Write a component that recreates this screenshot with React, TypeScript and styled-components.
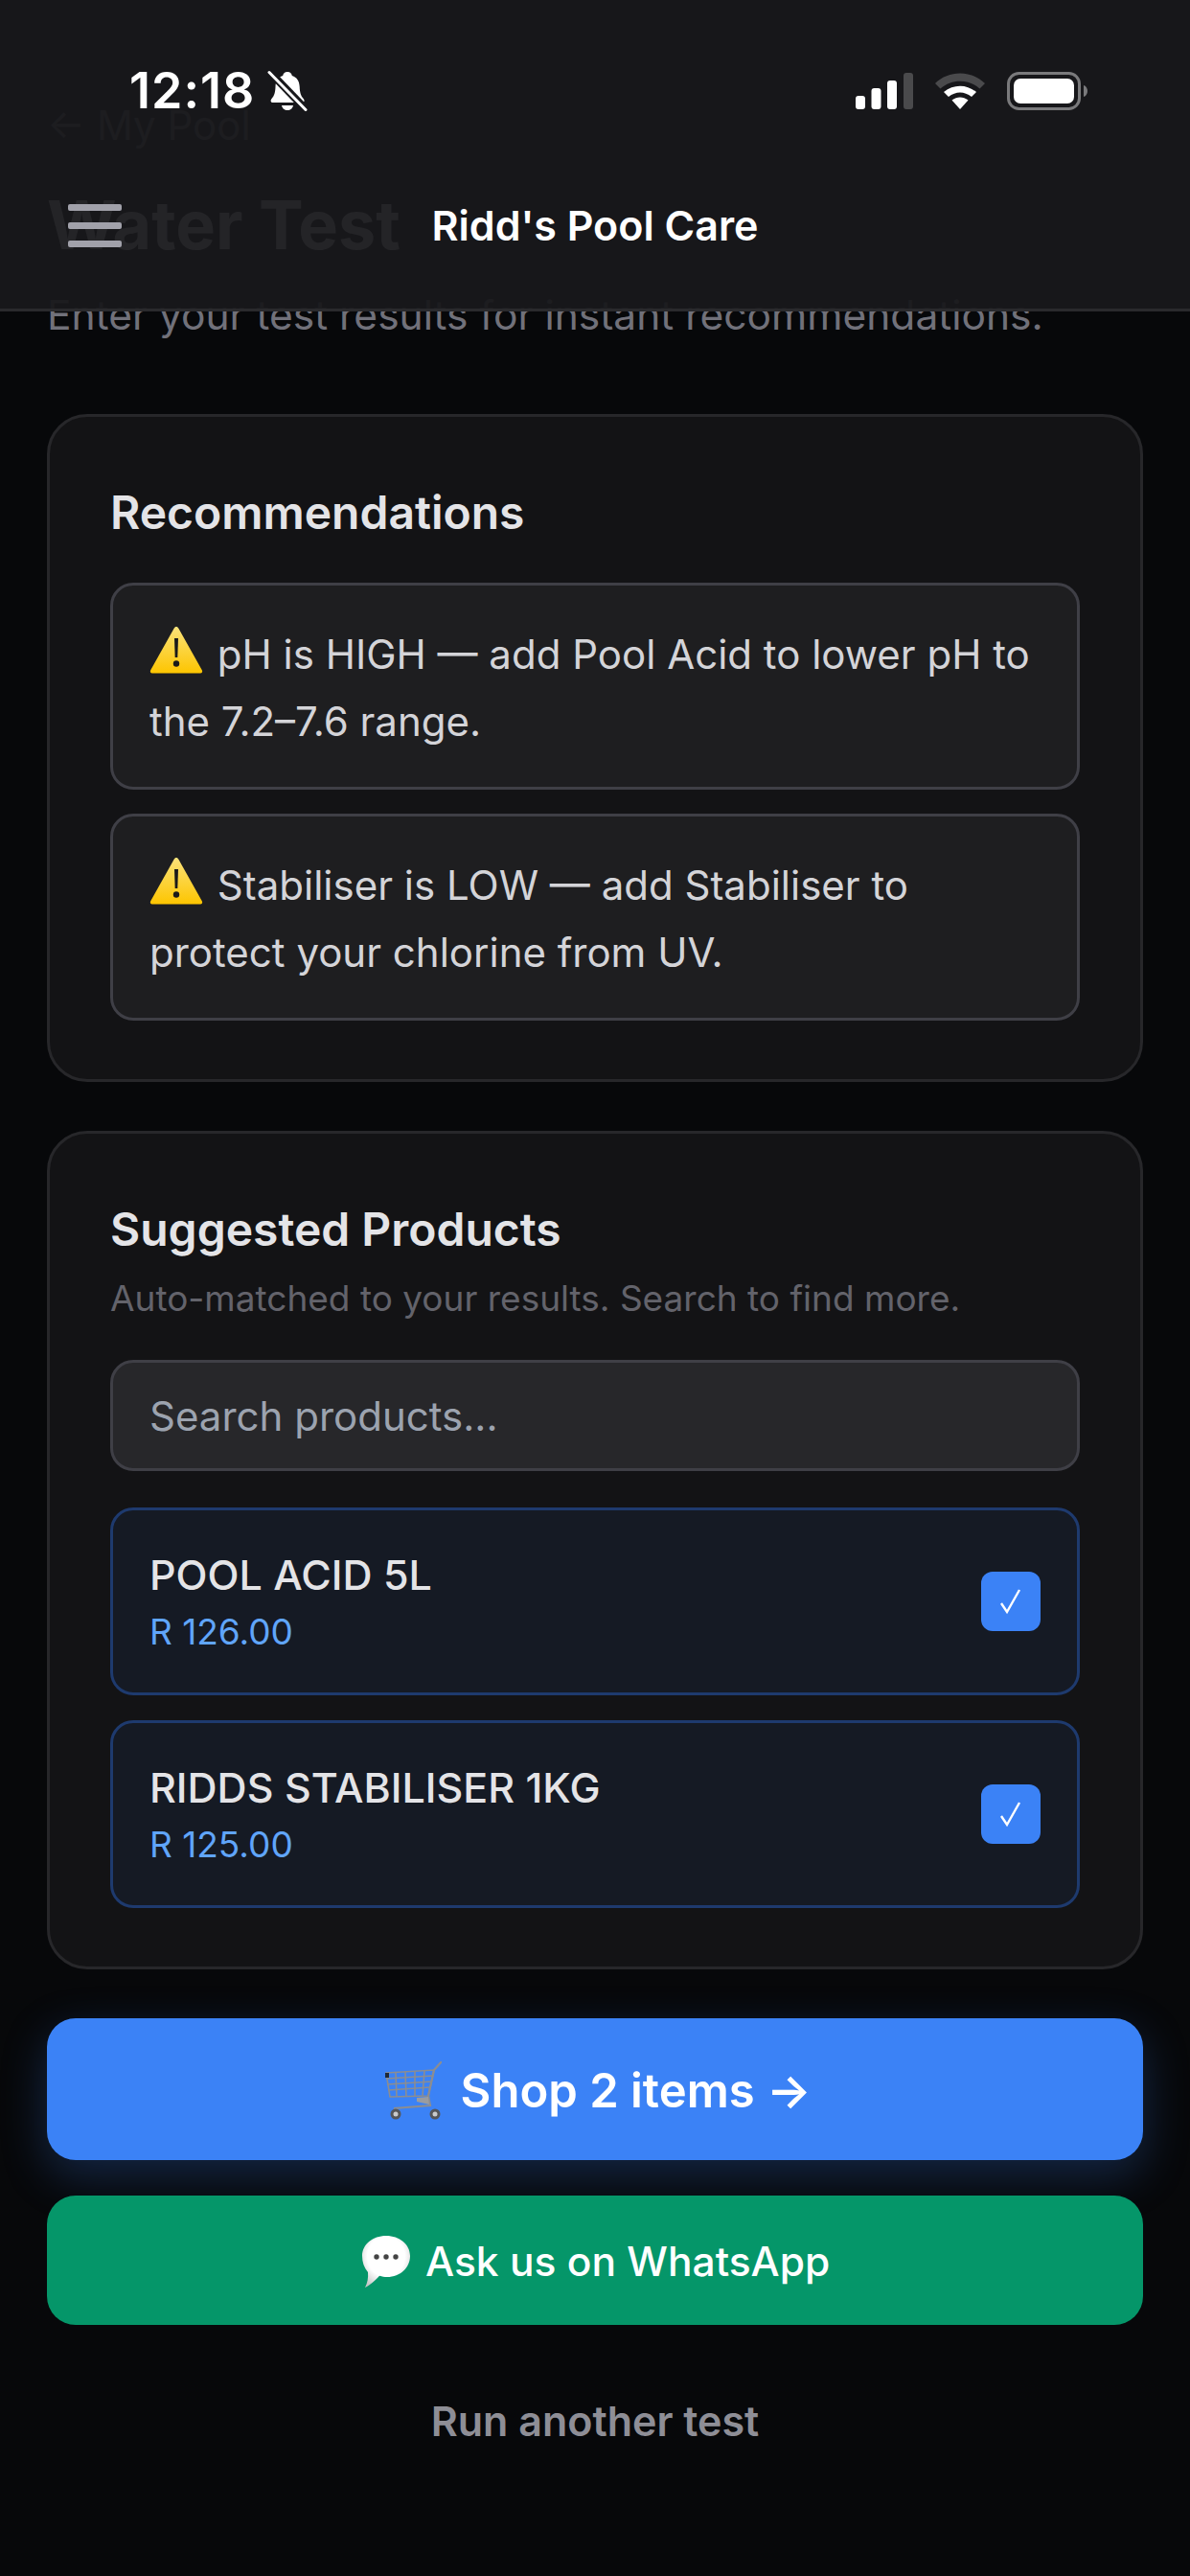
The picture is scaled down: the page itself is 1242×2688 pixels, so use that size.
import * as React from 'react';
import styled, { createGlobalStyle } from 'styled-components';

const GlobalStyle = createGlobalStyle`
  html, body {
    margin: 0;
    padding: 0;
    background: #07080a;
  }
  * {
    box-sizing: border-box;
  }
`;

function BellOff() {
  return (
    <BellSvg viewBox="0 0 42 42">
      <path
        d="M21 1c3 0 4.500 2 4.800 4 5.200 1.500 7.700 6 7.900 11.500.2 6 1.300 9.500 4 12.500 1.600 1.800 1 4-1.500 4H6c-2.500 0-3.100-2.200-1.500-4 2.700-3 3.800-6.500 4-12.500C8.700 11 11 6.500 16.200 5 16.500 3 18 1 21 1Z"
        fill="#fff"
      />
      <path d="M15 36h12c-.5 3-3 5-6 5s-5.500-2-6-5Z" fill="#fff" />
      <path d="M3 1.500 40 40" stroke="#18181b" strokeWidth="8" />
      <path d="M2 1.500 40 40.500" stroke="#fff" strokeWidth="3" strokeLinecap="round" />
    </BellSvg>
  );
}

function StatusIcons() {
  return (
    <StatusRight>
      <svg width="60" height="38" viewBox="0 0 60 38">
        <rect x="0" y="24" width="10" height="14" rx="3" fill="#fff" />
        <rect x="16.500" y="16" width="10" height="22" rx="3" fill="#fff" />
        <rect x="33" y="8" width="10" height="30" rx="3" fill="#fff" />
        <rect x="50" y="0" width="10" height="38" rx="3" fill="#4a4a4c" />
      </svg>
      <svg width="52" height="38" viewBox="0 0 52 38">
        <path d="M0 11C14-3 38-3 52 11l-5.500 5.500C35 6 17 6 5.500 16.500Z" fill="#4a4a4c" />
        <path d="M9 20c10-8.500 24-8.500 34 0l-5 5c-7.500-6-16.500-6-24 0Z" fill="#fff" />
        <path d="M17.500 28.500c5.500-4 11.500-4 17 0L26 38Z" fill="#fff" />
      </svg>
      <svg width="84" height="40" viewBox="0 0 84 40">
        <rect x="1.500" y="1.500" width="74" height="37" rx="11" fill="none" stroke="#7a7a7c" strokeWidth="3" />
        <rect x="7" y="7" width="63" height="26" rx="7" fill="#fff" />
        <path d="M80 14c2.500.8 4 3 4 6s-1.500 5.200-4 6Z" fill="#7a7a7c" />
      </svg>
    </StatusRight>
  );
}

function WarningEmoji() {
  return (
    <EmojiSvg viewBox="0 0 56 50" $w={56} $h={50} $drop={-5} $gap={3}>
      <defs>
        <linearGradient id="warn" x1="0" y1="0" x2="0" y2="1">
          <stop offset="0" stopColor="#fbe27a" />
          <stop offset="1" stopColor="#fdc500" />
        </linearGradient>
      </defs>
      <path
        d="M28 1c1 0 1.800.6 2.400 1.700l24.400 43.500c.9 1.700.1 3.300-1.800 3.300H3c-1.900 0-2.700-1.600-1.800-3.300L25.600 2.700C26.200 1.600 27 1 28 1Z"
        fill="url(#warn)"
      />
      <path d="M26 13h4l-.7 20h-2.600Z" fill="#1a1a1a" />
      <circle cx="28" cy="39.500" r="3.200" fill="#1a1a1a" />
    </EmojiSvg>
  );
}

function CartEmoji() {
  return (
    <EmojiSvg viewBox="0 0 60 62" $w={60} $h={62} $drop={-14} $gap={7}>
      <g fill="none" stroke="#8b8d92" strokeWidth="1.600">
        <path d="M2 12 52 9 46 36 6 37Z" />
        <path d="M2 18 51 15M3 24 50 21M4 30 48 27" />
        <path d="M12 12 13 37M22 11 23 37M32 11 32 37M42 10 40 36" />
      </g>
      <path d="M60 0 52 9 46 36 48 46 10 49" fill="none" stroke="#8b8d92" strokeWidth="2.200" />
      <path d="M34 38 46 37 47 45 34 42Z" fill="#9a9ca0" />
      <rect x="1" y="12" width="4" height="5" fill="#1f2937" />
      <circle cx="12" cy="55" r="5.500" fill="#55565a" />
      <circle cx="12" cy="55" r="2.500" fill="#c9cacd" />
      <circle cx="53" cy="55" r="5.500" fill="#55565a" />
      <circle cx="53" cy="55" r="2.500" fill="#c9cacd" />
    </EmojiSvg>
  );
}

function ChatEmoji() {
  return (
    <EmojiSvg viewBox="0 0 54 54" $w={54} $h={54} $drop={-12} $gap={3}>
      <defs>
        <radialGradient id="bubble" cx="0.5" cy="0.4" r="0.65">
          <stop offset="0.6" stopColor="#ffffff" />
          <stop offset="1" stopColor="#c8c8c8" />
        </radialGradient>
      </defs>
      <path
        d="M27 0c14 0 25 9 25 21S42 43 28 43c-3 0-5-.4-8-1.200C16 46 10 52 5 54c2.500-5 3.500-10 3-16C4 33.500 2 27.500 2 21 2 9 13 0 27 0Z"
        fill="url(#bubble)"
      />
      <circle cx="17" cy="22" r="2.700" fill="#444" />
      <circle cx="27" cy="22" r="2.700" fill="#444" />
      <circle cx="37" cy="22" r="2.700" fill="#444" />
    </EmojiSvg>
  );
}

const products = [
  { name: 'POOL ACID 5L', price: 'R 126.00' },
  { name: 'RIDDS STABILISER 1KG', price: 'R 125.00' },
];

export default function App() {
  return (
    <Page>
      <GlobalStyle />
      <TopBar>
        <StatusBar>
          <StatusLeft>
            <Time>12:18</Time>
            <BellOff />
          </StatusLeft>
          <StatusIcons />
        </StatusBar>
        <NavRow>
          <Burger>
            <span />
            <span />
            <span />
          </Burger>
          <Brand>Ridd's Pool Care</Brand>
        </NavRow>
      </TopBar>

      <BackLink>← My Pool</BackLink>
      <PageTitle>Water Test</PageTitle>
      <Subtitle>Enter your test results for instant recommendations.</Subtitle>

      <Card>
        <CardTitle>Recommendations</CardTitle>
        <AlertList>
          <Alert>
            <WarningEmoji /> pH is HIGH — add Pool Acid to lower pH to the 7.2–7.6 range.
          </Alert>
          <Alert>
            <WarningEmoji /> Stabiliser is LOW — add Stabiliser to protect your chlorine from UV.
          </Alert>
        </AlertList>
      </Card>

      <Card>
        <CardTitle $tight>Suggested Products</CardTitle>
        <CardHint>Auto-matched to your results. Search to find more.</CardHint>
        <SearchInput placeholder="Search products..." readOnly />
        <ProductList>
          {products.map((p) => (
            <Product key={p.name}>
              <div>
                <ProductName>{p.name}</ProductName>
                <ProductPrice>{p.price}</ProductPrice>
              </div>
              <CheckBox>
                <svg width="30" height="30" viewBox="0 0 30 30">
                  <path d="M5 17 11 26 24 3" fill="none" stroke="#fff" strokeWidth="2.400" />
                </svg>
              </CheckBox>
            </Product>
          ))}
        </ProductList>
      </Card>

      <ShopButton>
        <CartEmoji /> Shop 2 items →
      </ShopButton>
      <WhatsAppButton>
        <ChatEmoji /> Ask us on WhatsApp
      </WhatsAppButton>
      <RunAgain>Run another test</RunAgain>
    </Page>
  );
}

const Page = styled.div`
  position: relative;
  width: 1242px;
  height: 2688px;
  overflow: hidden;
  padding: 110px 49px 0;
  background: #07080a;
  font-family: Inter, 'Liberation Sans', sans-serif;
  color: #e4e4e7;
`;

const TopBar = styled.header`
  position: absolute;
  top: 0;
  left: 0;
  right: 0;
  height: 325px;
  background: rgba(24, 24, 27, 0.95);
  border-bottom: 3px solid #2a2a2d;
`;

const StatusBar = styled.div`
  display: flex;
  justify-content: space-between;
  align-items: center;
  height: 40px;
  margin-top: 75px;
  padding: 0 107px 0 135px;
`;

const StatusLeft = styled.div`
  display: flex;
  align-items: center;
  gap: 13px;
`;

const Time = styled.span`
  font-size: 52px;
  line-height: 40px;
  font-weight: 600;
  color: #fff;
  letter-spacing: 1px;
`;

const BellSvg = styled.svg`
  width: 42px;
  height: 44px;
`;

const StatusRight = styled.div`
  display: flex;
  align-items: center;
  gap: 23px;
`;

const NavRow = styled.div`
  display: grid;
  grid-template-columns: 1fr auto 1fr;
  align-items: center;
  margin-top: 95px;
  padding: 0 71px;
`;

const Burger = styled.div`
  display: flex;
  flex-direction: column;
  gap: 12px;
  width: 56px;

  span {
    display: block;
    height: 7px;
    border-radius: 2px;
    background: #a1a1aa;
  }
`;

const Brand = styled.div`
  font-size: 43px;
  line-height: 50px;
  font-weight: 600;
  color: #fff;
`;

const BackLink = styled.div`
  font-size: 42px;
  line-height: 42px;
  color: #71717a;
`;

const PageTitle = styled.h1`
  margin: 43px 0 0;
  font-size: 70px;
  line-height: 80px;
  font-weight: 700;
  color: #f4f4f5;
`;

const Subtitle = styled.p`
  margin: 29px 0 0;
  font-size: 42.500px;
  line-height: 50px;
  color: #71717a;
`;

const Card = styled.section`
  margin-bottom: 51px;
  padding: 66px 63px 61px;
  background: #131315;
  border: 3px solid #27272a;
  border-radius: 42px;

  ${Subtitle} + & {
    margin-top: 78px;
  }
`;

const CardTitle = styled.h3<{ $tight?: boolean }>`
  margin: 0 0 ${(p) => (p.$tight ? '10px' : '39px')};
  font-size: 48px;
  line-height: 68px;
  font-weight: 600;
  color: #e4e4e7;
`;

const AlertList = styled.div`
  display: flex;
  flex-direction: column;
  gap: 25px;
`;

const Alert = styled.div`
  padding: 37px 38px 33px;
  background: #1e1e20;
  border: 3px solid #3f3f46;
  border-radius: 24px;
  font-size: 42px;
  line-height: 70px;
  color: #d4d4d8;
`;

const EmojiSvg = styled.svg<{ $w: number; $h: number; $drop: number; $gap: number }>`
  display: inline-block;
  width: ${(p) => p.$w}px;
  height: ${(p) => p.$h}px;
  margin-right: ${(p) => p.$gap}px;
  vertical-align: ${(p) => p.$drop}px;
`;

const CardHint = styled.p`
  margin: 0 0 36px;
  font-size: 37px;
  line-height: 56px;
  color: #63636b;
`;

const SearchInput = styled.input`
  display: block;
  width: 100%;
  height: 116px;
  padding: 0 38px;
  background: #27272a;
  border: 3px solid #3f3f46;
  border-radius: 24px;
  font-family: inherit;
  font-size: 42px;
  color: #e4e4e7;
  outline: none;

  &::placeholder {
    color: #9ca3af;
    opacity: 1;
  }
`;

const ProductList = styled.div`
  display: flex;
  flex-direction: column;
  gap: 26px;
  margin-top: 38px;
`;

const Product = styled.div`
  display: flex;
  align-items: center;
  justify-content: space-between;
  height: 196px;
  padding: 0 38px;
  background: #151a24;
  border: 3px solid #1e3a6e;
  border-radius: 24px;
`;

const ProductName = styled.div`
  font-size: 43px;
  line-height: 54px;
  font-weight: 450;
  color: #e4e4e7;
`;

const ProductPrice = styled.div`
  margin-top: 10px;
  font-size: 37px;
  line-height: 46px;
  color: #60a5fa;
`;

const CheckBox = styled.div`
  display: flex;
  align-items: center;
  justify-content: center;
  width: 62px;
  height: 62px;
  border-radius: 12px;
  background: #3b82f6;
`;

const ShopButton = styled.button`
  display: block;
  width: 100%;
  height: 148px;
  padding: 4px 0 0 6px;
  border: none;
  border-radius: 30px;
  background: #3b82f6;
  box-shadow: 0 16px 48px rgba(59, 130, 246, 0.25);
  font-family: inherit;
  font-size: 49px;
  font-weight: 600;
  color: #fff;
`;

const WhatsAppButton = styled.button`
  display: block;
  width: 100%;
  height: 135px;
  margin-top: 37px;
  padding: 2px 0 0;
  border: none;
  border-radius: 30px;
  background: #059669;
  font-family: inherit;
  font-size: 42.500px;
  font-weight: 500;
  color: #fff;
`;

const RunAgain = styled.div`
  margin-top: 72px;
  font-size: 43px;
  line-height: 56px;
  font-weight: 600;
  text-align: center;
  color: #8e8e96;
`;
